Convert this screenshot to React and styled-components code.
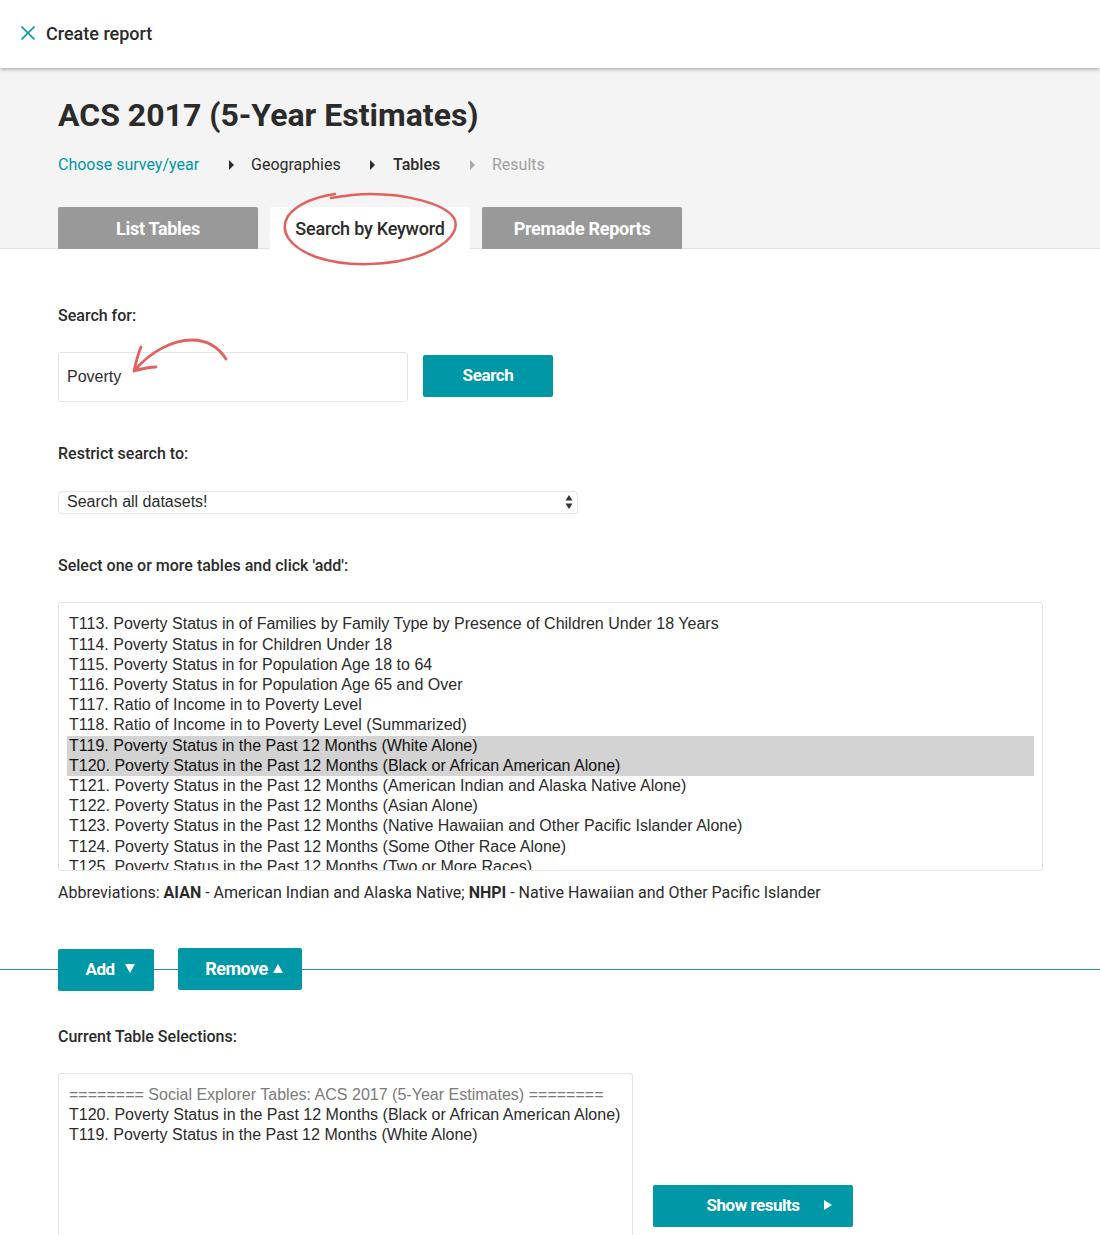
import React from 'react';
import styled, { createGlobalStyle } from 'styled-components';

const teal = '#0097a7';

const GlobalStyle = createGlobalStyle`
  html, body {
    margin: 0;
    padding: 0;
    background: #fff;
    overflow: hidden;
  }
  body {
    font-family: Roboto, "Liberation Sans", sans-serif;
    font-size: 16px;
    color: #2b2b2b;
  }
  * {
    box-sizing: border-box;
  }
`;

const Page = styled.div`
  position: relative;
  width: 1100px;
  height: 1235px;
  overflow: hidden;
`;

const TopBar = styled.div`
  position: relative;
  z-index: 2;
  height: 68px;
  display: flex;
  align-items: center;
  padding: 0 0 2px 20px;
  background: #fff;
  box-shadow: 0 1px 4px rgba(0, 0, 0, 0.35);
`;

const TopTitle = styled.div`
  margin-left: 10px;
  font-size: 18px;
  font-weight: 500;
  color: #2b2b2b;
`;

const Band = styled.div`
  height: 181px;
  padding: 26px 58px 0;
  background: #f4f4f4;
  border-bottom: 1px solid #e2e2e2;
`;

const Title = styled.h1`
  margin: 0;
  height: 41px;
  padding-top: 1px;
  font-size: 32px;
  line-height: 41px;
  font-weight: 700;
  color: #2b2b2b;
`;

const Steps = styled.div`
  display: flex;
  align-items: center;
  height: 20px;
  margin-top: 20px;
  line-height: 20px;
`;

const Step = styled.div`
  width: ${(p) => p.$width}px;
  color: ${(p) => p.$color || '#2b2b2b'};
  font-weight: ${(p) => p.$weight || 400};
`;

const StepArrow = styled.div`
  width: 0;
  height: 0;
  margin-right: ${(p) => p.$gap}px;
  border-style: solid;
  border-width: 5px 0 5px 5px;
  border-color: transparent transparent transparent ${(p) => p.$color || '#2b2b2b'};
`;

const Tabs = styled.div`
  display: flex;
  gap: 12px;
  margin-top: 32px;
`;

const Tab = styled.div`
  position: relative;
  z-index: ${(p) => (p.$active ? 1 : 0)};
  height: ${(p) => (p.$active ? 43 : 42)}px;
  width: ${(p) => p.$width}px;
  display: flex;
  align-items: center;
  justify-content: center;
  padding-bottom: ${(p) => (p.$active ? 1 : 0)}px;
  border-radius: 2px 2px 0 0;
  font-size: 18px;
  letter-spacing: ${(p) => (p.$active ? -0.22 : -0.3)}px;
  background: ${(p) => (p.$active ? '#fff' : '#999')};
  color: ${(p) => (p.$active ? '#2b2b2b' : '#fff')};
  font-weight: ${(p) => (p.$active ? 500 : 700)};
`;

const Content = styled.div`
  padding: 0 58px;
`;

const Label = styled.div`
  font-weight: 500;
  line-height: 20px;
  margin-top: ${(p) => p.$top}px;
`;

const SearchRow = styled.div`
  display: flex;
  align-items: flex-start;
  gap: 15px;
  margin-top: 26px;
`;

const SearchInput = styled.div`
  width: 350px;
  height: 50px;
  display: flex;
  align-items: center;
  padding-left: 8px;
  background: #fff;
  border: 1px solid #e4e4e4;
  border-radius: 3px;
  font-family: "Liberation Sans", Arial, sans-serif;
  font-size: 16px;
`;

const Button = styled.div`
  display: flex;
  align-items: center;
  justify-content: center;
  width: ${(p) => p.$width}px;
  height: 42px;
  background: ${teal};
  border-radius: 2px;
  color: #fff;
  font-weight: 700;
  font-size: 17px;
  letter-spacing: -0.4px;
`;

const SearchButton = styled(Button)`
  margin-top: 3px;
  padding-bottom: 2px;
`;

const Select = styled.div`
  width: 520px;
  height: 23px;
  display: flex;
  align-items: center;
  justify-content: space-between;
  margin-top: 27px;
  padding: 0 3px 2px 8px;
  border: 1px solid #e4e4e4;
  border-radius: 4px;
  font-family: "Liberation Sans", Arial, sans-serif;
  font-size: 16px;
`;

const ListBox = styled.div`
  width: 985px;
  height: 269px;
  margin-top: 26px;
  padding: 11.3px 8px 0;
  overflow: hidden;
  border: 1px solid #e4e4e4;
  border-radius: 3px;
  font-family: "Liberation Sans", Arial, sans-serif;
  font-size: 16px;
  line-height: 20.2px;
  letter-spacing: 0.012px;
`;

const Option = styled.div`
  padding-left: 2px;
  white-space: nowrap;
  background: ${(p) => (p.$selected ? '#d3d3d3' : 'transparent')};
  color: ${(p) => (p.$muted ? '#7a7a7a' : p.$selected ? '#111' : '#2b2b2b')};
`;

const Note = styled.div`
  margin-top: 12px;
  line-height: 20px;
  color: #2b2b2b;
`;

const ActionRow = styled.div`
  position: relative;
  display: flex;
  align-items: center;
  gap: 24px;
  height: 44px;
  margin: 44px -58px 0;
  padding-left: 58px;
  &::before {
    content: '';
    position: absolute;
    left: 0;
    right: 0;
    top: 22px;
    border-top: 1px solid #2b8c9c;
  }
`;

const ActionButton = styled(Button)`
  position: relative;
  gap: ${(p) => p.$gap}px;
  margin-top: ${(p) => p.$offset}px;
  padding: 0 0 ${(p) => p.$lift}px 8px;
  font-size: ${(p) => p.$size}px;
  letter-spacing: -0.5px;
`;

const Triangle = styled.div`
  width: 0;
  height: 0;
  border-left: 5px solid transparent;
  border-right: 5px solid transparent;
  ${(p) => (p.$up ? 'border-bottom: 9px solid #fff;' : 'border-top: 9px solid #fff;')}
`;

const Selections = styled.div`
  display: flex;
  align-items: flex-end;
  gap: 20px;
  margin-top: 26px;
`;

const SelectionBox = styled(ListBox)`
  width: 575px;
  height: 200px;
  margin-top: 0;
  padding-top: 11px;
  border-bottom: 0;
`;

const ResultsButton = styled(Button)`
  gap: 25px;
  margin-bottom: 46px;
  padding: 0 0 2px 33px;
  letter-spacing: -0.5px;
`;

const ResultsArrow = styled.div`
  width: 0;
  height: 0;
  border-style: solid;
  border-width: 5px 0 5px 8px;
  border-color: transparent transparent transparent #fff;
`;

const Overlay = styled.svg`
  position: absolute;
  left: 0;
  top: 0;
  z-index: 3;
  pointer-events: none;
`;

const tables = [
  'T113. Poverty Status in of Families by Family Type by Presence of Children Under 18 Years',
  'T114. Poverty Status in for Children Under 18',
  'T115. Poverty Status in for Population Age 18 to 64',
  'T116. Poverty Status in for Population Age 65 and Over',
  'T117. Ratio of Income in to Poverty Level',
  'T118. Ratio of Income in to Poverty Level (Summarized)',
  'T119. Poverty Status in the Past 12 Months (White Alone)',
  'T120. Poverty Status in the Past 12 Months (Black or African American Alone)',
  'T121. Poverty Status in the Past 12 Months (American Indian and Alaska Native Alone)',
  'T122. Poverty Status in the Past 12 Months (Asian Alone)',
  'T123. Poverty Status in the Past 12 Months (Native Hawaiian and Other Pacific Islander Alone)',
  'T124. Poverty Status in the Past 12 Months (Some Other Race Alone)',
  'T125. Poverty Status in the Past 12 Months (Two or More Races)',
];

const selected = ['T119', 'T120'];

const CloseIcon = () => (
  <svg width="16" height="16" viewBox="0 0 16 16" fill="none">
    <path d="M1.5 1.5 14.5 14.5M14.5 1.5 1.5 14.5" stroke={teal} strokeWidth="1.7" />
  </svg>
);

const SelectArrows = () => (
  <svg width="10" height="16" viewBox="0 0 10 16">
    <path d="M5 1 8.5 6.5H1.5ZM5 15 1.5 9.5H8.5Z" fill="#333" />
  </svg>
);

const App = () => (
  <Page>
    <GlobalStyle />
    <TopBar>
      <CloseIcon />
      <TopTitle>Create report</TopTitle>
    </TopBar>
    <Band>
      <Title>ACS 2017 (5-Year Estimates)</Title>
      <Steps>
        <Step $width={171} $color={teal}>Choose survey/year</Step>
        <StepArrow $gap={17} />
        <Step $width={119}>Geographies</Step>
        <StepArrow $gap={18} />
        <Step $width={77} $weight={500}>Tables</Step>
        <StepArrow $gap={17} $color="#a9a9a9" />
        <Step $width={70} $color="#a0a0a0">Results</Step>
      </Steps>
      <Tabs>
        <Tab $width={200}>List Tables</Tab>
        <Tab $width={200} $active>Search by Keyword</Tab>
        <Tab $width={200}>Premade Reports</Tab>
      </Tabs>
    </Band>
    <Content>
      <Label $top={57}>Search for:</Label>
      <SearchRow>
        <SearchInput>Poverty</SearchInput>
        <SearchButton $width={130}>Search</SearchButton>
      </SearchRow>
      <Label $top={42}>Restrict search to:</Label>
      <Select>
        Search all datasets!
        <SelectArrows />
      </Select>
      <Label $top={42}>Select one or more tables and click 'add':</Label>
      <ListBox>
        {tables.map((t) => (
          <Option key={t} $selected={selected.includes(t.slice(0, 4))}>{t}</Option>
        ))}
      </ListBox>
      <Note>
        Abbreviations: <b>AIAN</b> - American Indian and Alaska Native; <b>NHPI</b> - Native Hawaiian and Other Pacific Islander
      </Note>
      <ActionRow>
        <ActionButton $width={96} $gap={10} $offset={1} $size={17} $lift={2}>Add<Triangle /></ActionButton>
        <ActionButton $width={124} $gap={5} $offset={-1} $size={18} $lift={0}>Remove<Triangle $up /></ActionButton>
      </ActionRow>
      <Label $top={36}>Current Table Selections:</Label>
      <Selections>
        <SelectionBox>
          <Option $muted>======== Social Explorer Tables: ACS 2017 (5-Year Estimates) ========</Option>
          <Option>T120. Poverty Status in the Past 12 Months (Black or African American Alone)</Option>
          <Option>T119. Poverty Status in the Past 12 Months (White Alone)</Option>
        </SelectionBox>
        <ResultsButton $width={200}>
          Show results
          <ResultsArrow />
        </ResultsButton>
      </Selections>
    </Content>
    <Overlay width="1100" height="400" viewBox="0 0 1100 400" fill="none">
      <path
        d="M335 194C316 197 297 204 288 216C279 231 289 247 316 257C345 267 390 267 424 254C449 244 460 230 454 218C444 203 405 194 370 194C355 194 343 196 331 198"
        stroke="#e2615c"
        strokeWidth="2.5"
        strokeLinecap="round"
      />
      <path
        d="M226 359C217 345 205 340 192 340C172 340 150 352 134 371M134 371C136 362 138 354 141 347M134 371C141 369 148 367 156 367"
        stroke="#e2615c"
        strokeWidth="2.8"
        strokeLinecap="round"
      />
    </Overlay>
  </Page>
);

export default App;
